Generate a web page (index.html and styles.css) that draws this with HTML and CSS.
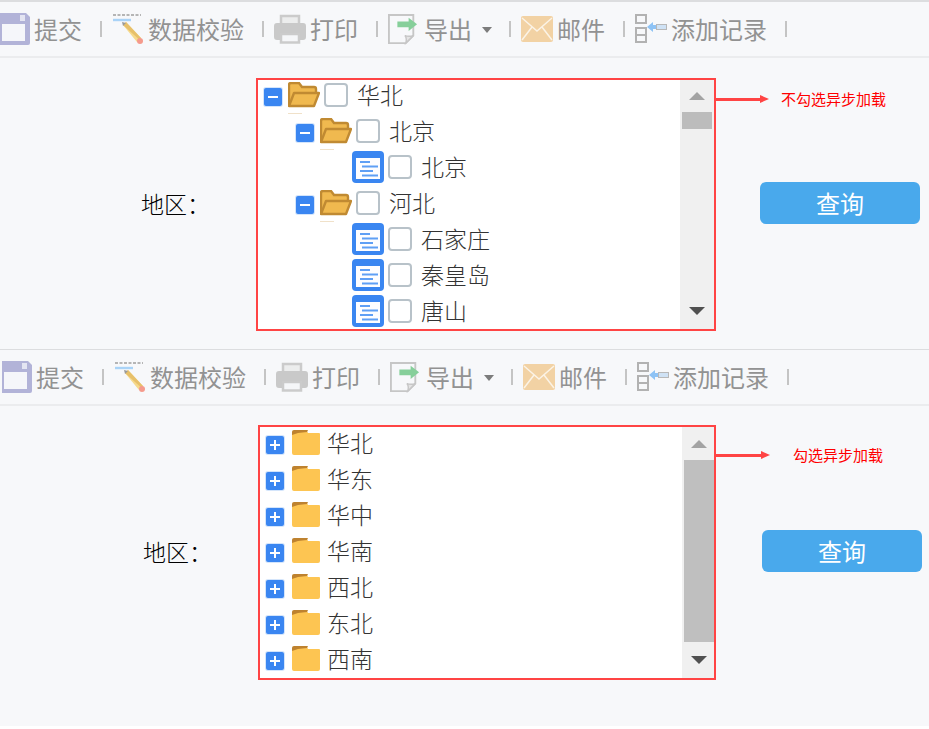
FILE: index.html
```html
<!DOCTYPE html>
<html lang="zh-CN">
<head>
<meta charset="utf-8">
<title>地区查询</title>
<link rel="stylesheet" href="styles.css">
</head>
<body>
<svg class="defs" width="0" height="0" aria-hidden="true">
  <defs>
    <symbol id="i-save" viewBox="0 0 30 32">
      <path d="M0 0h26l4 4v26a2 2 0 0 1-2 2H0z" fill="#b2b3d8"/>
      <rect x="2" y="11" width="23" height="17" fill="#f5f6fa"/>
      <rect x="20" y="2" width="5" height="6" fill="#e4e5f2"/>
    </symbol>
    <symbol id="i-check" viewBox="0 0 32 32">
      <path d="M1 2h28" stroke="#b5b5b5" stroke-width="2" stroke-dasharray="3 1.500"/>
      <path d="M1 7h18" stroke="#a9d3f7" stroke-width="2.400"/>
      <path d="M11 12l3-3 15 16-4 4z" fill="#f6d98c"/>
      <path d="M11 12l3-3 15 16-1.600 1.700z" fill="#e7c06a"/>
      <path d="M10 9l4 1-3 3z" fill="#9a9a9a"/>
      <circle cx="28" cy="28" r="3" fill="#f59a8c"/>
    </symbol>
    <symbol id="i-print" viewBox="0 0 32 30">
      <path d="M7 2h18v10H7z" fill="#eceded" stroke="#cbcbcb" stroke-width="2.500"/>
      <path d="M3 9h26a3 3 0 0 1 3 3v11a3 3 0 0 1-3 3h-3v-7H6v7H3a3 3 0 0 1-3-3V12a3 3 0 0 1 3-3z" fill="#c9c9c9"/>
      <path d="M7 20h18v8.500H7z" fill="#f5f6f8" stroke="#cbcbcb" stroke-width="2.500"/>
    </symbol>
    <symbol id="i-export" viewBox="0 0 32 32">
      <path d="M1 1h26v22l-8 8H1z" fill="#f7f8fa" stroke="#c6c6c6" stroke-width="2"/>
      <path d="M19 31c1-4 0-7-1-8 3 1 6 1 9 0z" fill="#e4e4e4" stroke="#c6c6c6" stroke-width="1.500"/>
      <path d="M10 8h12V4l9 7-9 7v-4H10z" fill="#86cf9a"/>
    </symbol>
    <symbol id="i-mail" viewBox="0 0 32 26">
      <rect width="32" height="26" rx="2" fill="#f2d2a4"/>
      <path d="M1 2l15 13L31 2M1 24l10-13M31 24L21 11" fill="none" stroke="#fbf3e6" stroke-width="1.500"/>
    </symbol>
    <symbol id="i-add" viewBox="0 0 32 30">
      <path d="M1 1h10v8H1zM1 14h10v14H1zM1 21h10" fill="none" stroke="#b2b2b2" stroke-width="2"/>
      <path d="M12 13l6-5v3h3v4h-3v3z" fill="#8ec3f5"/>
      <rect x="21.500" y="10.500" width="10" height="5" fill="#cfe2f5" stroke="#b8b8b8"/>
    </symbol>
    <symbol id="i-open" viewBox="0 0 32 26">
      <path d="M1 23V3a2 2 0 0 1 2-2h8l3 4h12a2 2 0 0 1 2 2v4" fill="#f0b94f" stroke="#c08a32" stroke-width="2.400"/>
      <path d="M1 24l5-13h25l-5 13z" fill="#f0b94f" stroke="#c08a32" stroke-width="2.400" stroke-linejoin="round"/>
    </symbol>
    <symbol id="i-closed" viewBox="0 0 28 25">
      <path d="M0 3a2 2 0 0 1 2-2h13l1 2h11a1 1 0 0 1 1 1v19a2 2 0 0 1-2 2H2a2 2 0 0 1-2-2z" fill="#fdc552"/>
      <path d="M0 5V2a2 2 0 0 1 2-2h14l-1 2-9 1z" fill="#be822f"/>
    </symbol>
    <symbol id="i-leaf" viewBox="0 0 32 32">
      <rect width="32" height="32" rx="4" fill="#3a86f1"/>
      <rect x="4" y="7" width="24" height="21" fill="#fdfdff"/>
      <path d="M8 11h10M10 15.500h16M8 20h13M10 24.500h16" stroke="#5f9ff5" stroke-width="2"/>
    </symbol>
  </defs>
</svg>

<section class="panel panel-a">
  <div class="toolbar">
    <div class="tool"><svg class="ico ico-save"><use href="#i-save"/></svg><span>提交</span></div><i class="sep"></i>
    <div class="tool"><svg class="ico"><use href="#i-check"/></svg><span>数据校验</span></div><i class="sep"></i>
    <div class="tool"><svg class="ico ico-print"><use href="#i-print"/></svg><span>打印</span></div><i class="sep"></i>
    <div class="tool"><svg class="ico ico-export"><use href="#i-export"/></svg><span>导出</span><b class="caret"></b></div><i class="sep"></i>
    <div class="tool"><svg class="ico ico-mail"><use href="#i-mail"/></svg><span>邮件</span></div><i class="sep"></i>
    <div class="tool"><svg class="ico ico-add"><use href="#i-add"/></svg><span>添加记录</span></div><i class="sep"></i>
  </div>
  <div class="form">
    <label class="field-label">地区：</label>
    <div class="tree-box">
      <ul class="tree">
        <li class="node lv1"><i class="toggle minus"></i><span class="folder-open"><svg class="open"><use href="#i-open"/></svg></span><i class="cb"></i><span class="name">华北</span></li>
        <li class="node lv2"><i class="toggle minus"></i><span class="folder-open"><svg class="open"><use href="#i-open"/></svg></span><i class="cb"></i><span class="name">北京</span></li>
        <li class="node lv3"><svg class="leaf"><use href="#i-leaf"/></svg><i class="cb"></i><span class="name">北京</span></li>
        <li class="node lv2"><i class="toggle minus"></i><span class="folder-open"><svg class="open"><use href="#i-open"/></svg></span><i class="cb"></i><span class="name">河北</span></li>
        <li class="node lv3"><svg class="leaf"><use href="#i-leaf"/></svg><i class="cb"></i><span class="name">石家庄</span></li>
        <li class="node lv3"><svg class="leaf"><use href="#i-leaf"/></svg><i class="cb"></i><span class="name">秦皇岛</span></li>
        <li class="node lv3"><svg class="leaf"><use href="#i-leaf"/></svg><i class="cb"></i><span class="name">唐山</span></li>
      </ul>
      <div class="scrollbar">
        <div class="sb-btn"><i class="tri-up"></i></div>
        <div class="sb-track"><div class="sb-thumb"></div></div>
        <div class="sb-btn"><i class="tri-down"></i></div>
      </div>
    </div>
    <div class="side">
      <div class="note"><i class="note-line"></i><i class="note-head"></i><span class="note-text">不勾选异步加载</span></div>
      <button class="query" type="button">查询</button>
    </div>
  </div>
</section>

<section class="panel panel-b">
  <div class="toolbar">
    <div class="tool"><svg class="ico ico-save"><use href="#i-save"/></svg><span>提交</span></div><i class="sep"></i>
    <div class="tool"><svg class="ico"><use href="#i-check"/></svg><span>数据校验</span></div><i class="sep"></i>
    <div class="tool"><svg class="ico ico-print"><use href="#i-print"/></svg><span>打印</span></div><i class="sep"></i>
    <div class="tool"><svg class="ico ico-export"><use href="#i-export"/></svg><span>导出</span><b class="caret"></b></div><i class="sep"></i>
    <div class="tool"><svg class="ico ico-mail"><use href="#i-mail"/></svg><span>邮件</span></div><i class="sep"></i>
    <div class="tool"><svg class="ico ico-add"><use href="#i-add"/></svg><span>添加记录</span></div><i class="sep"></i>
  </div>
  <div class="form">
    <label class="field-label">地区：</label>
    <div class="tree-box">
      <ul class="tree">
        <li class="node"><i class="toggle plus"></i><svg class="closed"><use href="#i-closed"/></svg><span class="name">华北</span></li>
        <li class="node"><i class="toggle plus"></i><svg class="closed"><use href="#i-closed"/></svg><span class="name">华东</span></li>
        <li class="node"><i class="toggle plus"></i><svg class="closed"><use href="#i-closed"/></svg><span class="name">华中</span></li>
        <li class="node"><i class="toggle plus"></i><svg class="closed"><use href="#i-closed"/></svg><span class="name">华南</span></li>
        <li class="node"><i class="toggle plus"></i><svg class="closed"><use href="#i-closed"/></svg><span class="name">西北</span></li>
        <li class="node"><i class="toggle plus"></i><svg class="closed"><use href="#i-closed"/></svg><span class="name">东北</span></li>
        <li class="node"><i class="toggle plus"></i><svg class="closed"><use href="#i-closed"/></svg><span class="name">西南</span></li>
      </ul>
      <div class="scrollbar">
        <div class="sb-btn"><i class="tri-up"></i></div>
        <div class="sb-track"><div class="sb-thumb"></div></div>
        <div class="sb-btn"><i class="tri-down"></i></div>
      </div>
    </div>
    <div class="side">
      <div class="note"><i class="note-line"></i><i class="note-head"></i><span class="note-text">勾选异步加载</span></div>
      <button class="query" type="button">查询</button>
    </div>
  </div>
</section>
</body>
</html>
```
FILE: styles.css
```css
* { box-sizing: border-box; }
html, body { margin: 0; padding: 0; background: #fff; }
body {
  width: 929px;
  height: 729px;
  overflow: hidden;
  font-family: "Noto Sans CJK SC", "Noto Sans", sans-serif;
}
.defs { position: absolute; }
ul { list-style: none; margin: 0; padding: 0; }
i, b { display: block; }

.panel { background: #f7f8fa; }
.panel-a { height: 349px; border-top: 2px solid #dcdddf; }
.panel-b { height: 377px; border-top: 1px solid #dcdddf; }

/* toolbar */
.toolbar {
  display: flex;
  align-items: center;
  gap: 10px;
  height: 56px;
  border-bottom: 2px solid #ebecee;
  color: #929292;
  font-size: 24px;
  line-height: 54px;
}
.panel-b .toolbar { padding-left: 2px; }
.tool { display: flex; align-items: center; gap: 4px; margin-right: 8px; }
.tool span { display: block; }
.ico { display: block; width: 32px; height: 32px; flex: none; }
.ico-save { width: 30px; }
.ico-print { height: 30px; }
.ico-export { width: 30px; margin-right: 2px; }
.ico-mail { height: 26px; }
.ico-add { height: 30px; }
.sep { width: 2px; height: 16px; background: #c4c4c4; flex: none; }
.caret {
  width: 0;
  height: 0;
  margin: 2px -1px 0 6px;
  border-left: 5.500px solid transparent;
  border-right: 5.500px solid transparent;
  border-top: 6px solid #7c7c7c;
}

/* form row */
.form { display: flex; align-items: flex-start; }
.panel-a .form { padding: 20px 0 0 141px; }
.panel-b .form { padding: 19px 0 0 143px; }
.field-label {
  flex: none;
  width: 115px;
  font-size: 23px;
  line-height: 30px;
  color: #000;
  font-weight: 300;
}
.panel-a .field-label { margin-top: 110px; }
.panel-b .field-label { margin-top: 111px; }

/* tree */
.tree-box {
  flex: none;
  display: flex;
  border: 2px solid #ff4444;
  background: #fff;
}
.panel-a .tree-box { width: 460px; height: 253px; }
.panel-b .tree-box { width: 458px; height: 255px; }
.tree {
  flex: 1;
  min-width: 0;
  display: flex;
  flex-direction: column;
  gap: 6px;
  padding-left: 6px;
}
.panel-b .tree { padding-top: 1px; }
.node {
  flex: none;
  display: flex;
  align-items: center;
  height: 30px;
}
.lv2 { padding-left: 32px; }
.lv3 { padding-left: 88px; }
.name {
  font-size: 23px;
  line-height: 28px;
  margin-bottom: 2px;
  color: #333;
  font-weight: 300;
  white-space: nowrap;
}
.lv1 .name, .lv2 .name, .lv3 .name { margin-left: 9px; }
.panel-b .name { margin-left: 7px; }

.toggle {
  position: relative;
  flex: none;
  width: 18px;
  height: 18px;
  margin-top: 3px;
  border-radius: 2px;
  background: #3a86f1;
  box-shadow: 0 0 0 1px #d4e5fb;
}
.toggle::before {
  content: "";
  position: absolute;
  left: 4px;
  top: 8px;
  width: 10px;
  height: 2px;
  background: #fff;
}
.plus::after {
  content: "";
  position: absolute;
  left: 8px;
  top: 4px;
  width: 2px;
  height: 10px;
  background: #fff;
}
.panel-b .toggle { margin-top: 4px; }

.folder-open { position: relative; display: block; flex: none; margin-left: 6px; width: 32px; height: 26px; }
.folder-open::after {
  content: "";
  position: absolute;
  left: 0;
  top: 31px;
  width: 14px;
  height: 1px;
  background: #f0e1c9;
}
.open { display: block; width: 32px; height: 26px; }
.closed { display: block; flex: none; width: 28px; height: 25px; margin-left: 8px; margin-top: -1px; }
.leaf { display: block; flex: none; width: 32px; height: 32px; }
.cb {
  flex: none;
  width: 24px;
  height: 24px;
  margin-left: 4px;
  border: 2px solid #b8c2c9;
  border-radius: 4px;
  background: #fff;
}

/* scrollbar */
.scrollbar {
  flex: none;
  display: flex;
  flex-direction: column;
  background: #f0f0f0;
}
.panel-a .scrollbar { width: 34px; padding: 0 2px; }
.panel-b .scrollbar { width: 32px; padding-left: 2px; }
.sb-btn { flex: none; height: 36px; display: flex; align-items: center; justify-content: center; }
.panel-a .sb-btn:first-child { height: 32px; }
.panel-b .sb-btn:first-child { height: 33px; }
.sb-track { flex: 1; min-height: 0; }
.panel-a .sb-thumb { height: 17px; background: #bcbcbc; }
.panel-b .sb-thumb { height: 100%; background: #bfbfbf; }
.tri-up, .tri-down {
  width: 0;
  height: 0;
  border-left: 8px solid transparent;
  border-right: 8px solid transparent;
}
.tri-up { border-bottom: 8px solid #a3a3a3; }
.tri-down { border-top: 8px solid #505050; }

/* side column */
.side { flex: none; display: flex; flex-direction: column; align-items: flex-start; }
.note { display: flex; align-items: center; height: 20px; }
.panel-a .note { margin-top: 11px; }
.panel-b .note { margin-top: 20px; }
.note-line { width: 44px; height: 3px; background: #ff4444; }
.panel-b .note-line { width: 45px; }
.note-head {
  width: 0;
  height: 0;
  border-left: 9px solid #ff4444;
  border-top: 4px solid transparent;
  border-bottom: 4px solid transparent;
}
.note-text { font-size: 15px; line-height: 20px; color: #ff0000; white-space: nowrap; }
.panel-a .note-text { margin-left: 12px; }
.panel-b .note-text { margin-left: 23px; }
.query {
  width: 160px;
  height: 42px;
  padding: 0;
  border: 0;
  border-radius: 6px;
  background: #49a9ec;
  color: #fff;
  font: 24px/42px "Noto Sans CJK SC", "Noto Sans", sans-serif;
}
.panel-a .query { margin: 73px 0 0 44px; }
.panel-b .query { margin: 65px 0 0 46px; }
```
